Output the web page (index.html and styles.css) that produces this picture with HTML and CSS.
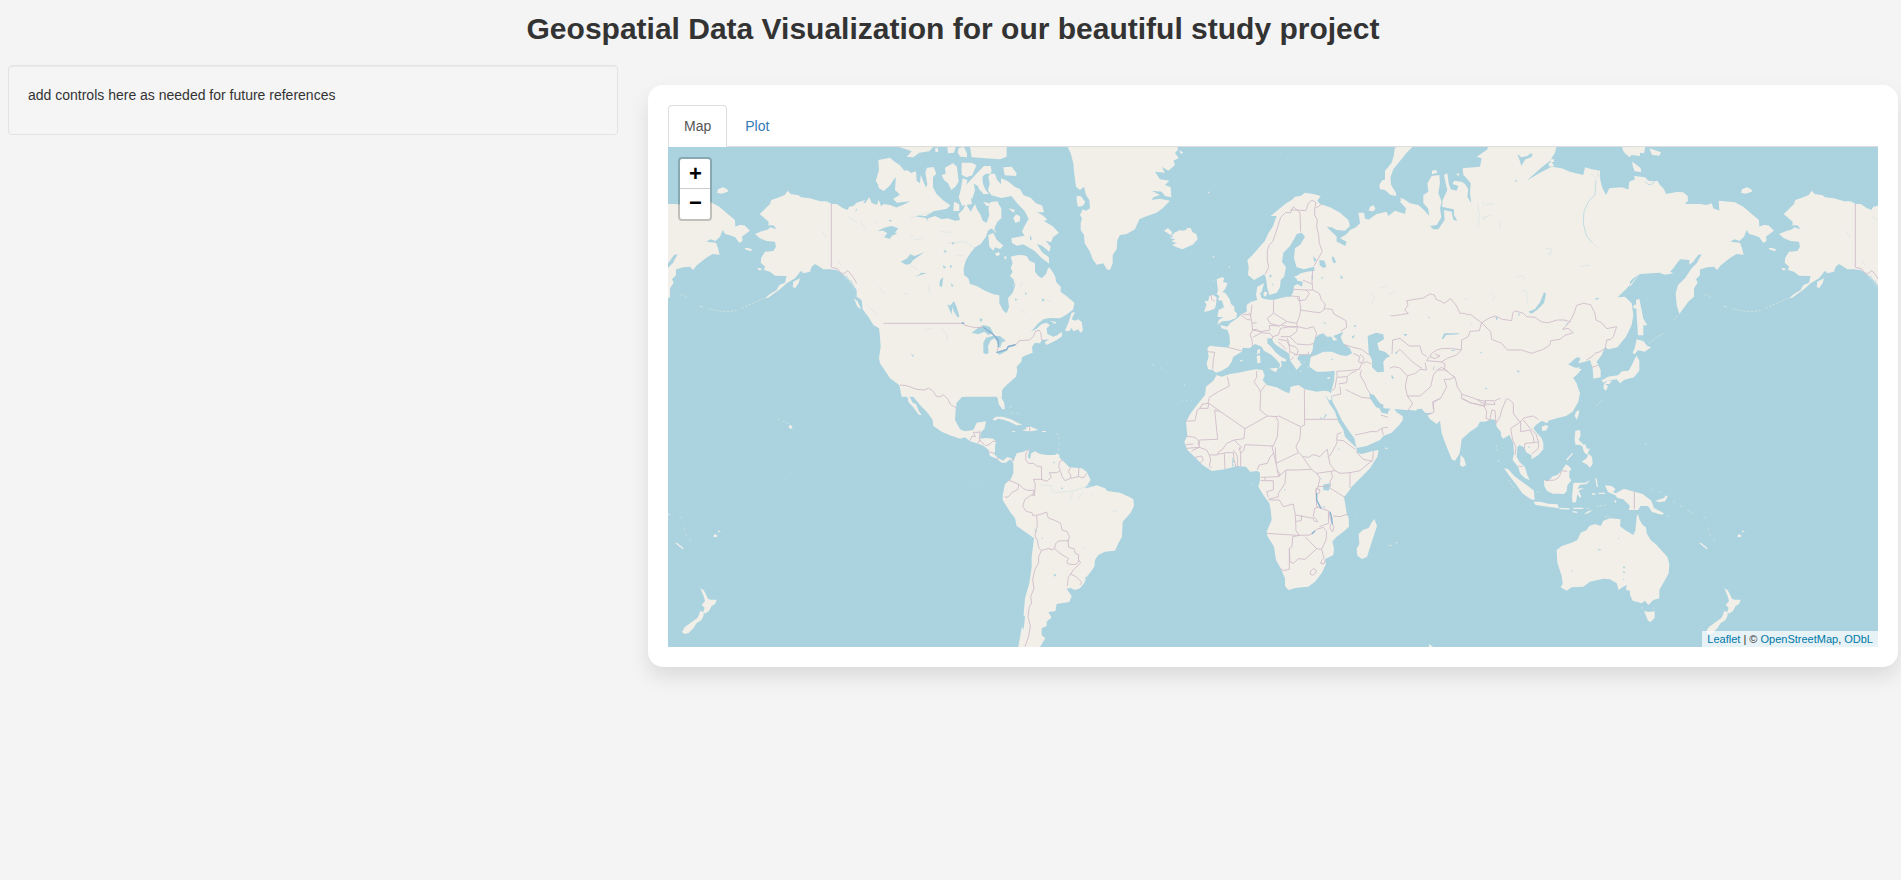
FILE: index.html
```html
<!DOCTYPE html>
<html lang="en">
<head>
<meta charset="utf-8">
<title>Geospatial Data Visualization</title>
<link rel="stylesheet" href="styles.css">
</head>
<body>
<h2 class="page-title">Geospatial Data Visualization for our beautiful study project</h2>
<div class="layout">
  <form class="well"><p>add controls here as needed for future references</p></form>
  <main class="card">
    <ul class="tabs">
      <li><a class="tab tab-active" href="#">Map</a></li>
      <li><a class="tab" href="#">Plot</a></li>
    </ul>
    <div class="map">
      <svg class="world" viewBox="668 147 1210 500" width="1210" height="500" aria-label="World map">
        <defs>
          <!-- Alaska and the Canadian north-west; repeated one world width to the east -->
          <g id="alaska" transform="translate(640 70) scale(.33333)">
            <path class="land" d="M359 432L372 420 390 402 394 390 412 384 434 375 443 362 452 372 476 376 483 382 510 385 540 394 560 394 575 402 590 402 608 414 622 420 628 410 640 408 650 398 676 390 665 404 650 415 645 425 665 412 680 402 688 382 692 398 712 405 716 390 722 410 730 402 750 405 775 415 800 430 830 440 860 445V780H735L720 760 700 752 685 738 690 725 670 705 662 680 650 660 635 640 615 618 590 600 570 598 550 598 535 588 525 582 515 590 510 605 490 610 483 602 465 625 440 640 420 658 400 672 385 683 375 685 390 672 410 660 418 645 435 638 440 618 405 617 390 605 372 600 375 590 362 578 364 563 375 545 400 543 408 530 405 515 380 513 360 505 345 492 365 484 385 478 390 472 410 478 400 466 385 466 386 455 372 443Z"/>
            <path class="land" d="M460 635l20 -10 -4 15 -10 14 -8 -3zM352 595l12 0 0 6 -8 0zM642 685l10 8 12 25 -12 -8zM684 738l18 4 30 24 0 16 -28 -22z"/>
            <path class="fringe" d="M372 685L350 695 325 705 300 718M290 722L260 725 230 722 205 716M190 712l-12 -4M140 682l-12 -8"/>
            <path class="inlet" d="M604 606l14 22 22 24M618 615l18 30 8 22M632 630l14 28"/>
            <path class="border" d="M574 402V592L592 596 606 614 624 602 640 622 656 650 671 665 668 680"/>
            <path class="stream" d="M595 575l10 12M545 482l15 20M625 440l30 20 25 30"/>
          </g>
          <!-- Siberia and Kamchatka; repeated one world width to the west -->
          <g id="far-east" transform="translate(1620 140) scale(.33333)">
            <path class="land" d="M-10 145L10 143 25 150 28 125 45 118 42 108 75 112 85 122 100 124 112 122 120 135 132 148 138 162 170 156 190 157 203 168 204 182 195 192 240 192 260 195 275 190 280 205 298 212 296 182 345 187 370 200 395 222 417 240 418 260 430 255 445 256 462 272 448 282 438 290 440 302 430 309 418 292 402 286 388 282 380 270 372 290 358 303 345 298 330 305 360 308 366 325 371 344 350 342 330 354 312 368 300 378 292 390 282 380 262 382 240 388 240 405 228 418 233 428 222 445 222 470 205 485 198 495 178 522 170 495 167 460 174 435 195 415 215 385 230 370 245 343 234 345 220 365 208 374 208 360 180 358 160 385 150 395 160 400 135 404 118 398 95 400 60 402 40 415 -10 465Z"/>
            <path class="land" d="M363 158l3 -10 15 -6 13 6 2 7 -20 6zM445 325l10 -2 15 6 -5 4 -15 -4zM8 22l45 0 0 15 -15 6 -10 8 -14 -12zM58 20l18 0 -4 20 -12 -2zM88 25l35 12 -5 10 -22 -2zM36 65l6 4 20 15 2 12 -20 -2 -5 -14z"/>
            <path class="fringe" d="M160 540l15 -15M130 580l-20 12 -28 22M255 460l4 10M312 498l8 4"/>
            <path class="inlet" d="M76 124l8 10 14 -2 6 -8"/>
          </g>
          <g id="south-pacific" transform="translate(1600 460) scale(.33333)">
            <path class="land" d="M373 385l10 6 8 14 5 12 10 2 16 0 -5 14 -10 4 -8 16 -12 8 -5 -6 4 -12 -9 -8 10 -12 -4 -15zM372 453l12 4 -2 12 -6 12 -14 8 -10 16 -14 14 -12 3 -8 -6 8 -14 18 -14 20 -14 6 -12zM415 222l9 4 -2 6 -10 -2zM426 212l9 1 -8 5z"/>
            <path class="islet" d="M300 249l22 17"/>
            <path class="fringe" d="M323 202l8 12M330 222l2 5M341 236l2 6M310 170l10 5"/>
          </g>
        </defs>

        <rect class="sea" x="668" y="147" width="1210" height="500"/>
        <use href="#far-east"/><use href="#far-east" x="-1024"/>
        <use href="#south-pacific"/><use href="#south-pacific" x="-1024"/>
        <use href="#alaska"/><use href="#alaska" x="1024"/>

        <!-- North America -->
        <g transform="translate(860 140) scale(.33333)">
          <path class="land" d="M-10 195L0 185 15 190 28 172 35 190 50 198 56 180 64 200 85 198 105 205 130 212 140 222 137 232 165 238 190 232 196 250 205 235 225 228 245 238 262 235 285 242 300 240 295 222 308 210 318 192 332 215 345 192 352 210 362 225 368 242 380 248 388 225 385 205 392 186 412 184 418 196 424 205 424 235 412 245 405 262 408 280 395 265 384 272 378 290 362 312 345 322 332 338 318 360 311 385 312 405 325 415 330 432 350 438 375 452 400 463 418 466 418 490 430 512 440 520 447 502 444 475 458 458 466 436 460 418 450 408 458 395 452 385 458 370 452 350 475 345 492 346 502 350 508 362 525 370 525 395 535 408 545 415 558 402 563 388 568 382 578 396 586 410 588 425 602 440 602 455 622 470 643 488 640 508 618 525 600 535 570 534 550 538 535 550 522 565 512 575 530 566 545 552 560 548 570 556 560 565 562 582 580 590 600 582 607 588 590 600 570 610 558 615 555 606 568 598 545 600 540 610 525 608 516 620 518 638 500 645 486 652 484 665 470 680 472 692 468 710 440 735 426 750V770H125L118 735 90 715 75 692 60 670 57 655 62 620 60 590 57 565 40 555 25 530 8 508 5 480 -10 470Z"/>
          <path class="land" d="M115 20l105 0 -12 14 -30 4 -18 14 -20 -2 15 -16zM262 22l25 -2 -5 18 -18 2zM296 25l15 -5 10 20 0 12 -20 -2 -8 -12zM330 20l110 0 0 30 -20 8 -85 -6zM225 25l8 -2 2 12 -8 2zM55 60l35 -7 14 12 15 10 15 18 -30 22 -15 22 -18 16 -14 -8 -4 -14 -6 -8 10 -33zM108 105l20 -12 15 -2 10 8 15 -5 2 28 10 8 2 -25 16 38 4 -10 -6 -35 5 -15 20 -2 8 20 -10 10 0 30 10 20 20 20 22 15 -10 10 -40 8 -25 15 -20 -3 -20 10 -18 -8 -10 -8 -18 -18 20 -8 20 -10 -40 4 -10 -12 20 -12 -15 -14zM245 105l12 -4 -2 -18 14 -8 10 -5 12 10 5 45 -10 15 -12 10 -10 -20 -12 -10zM305 68l30 0 14 8 -12 30 -18 6 -14 -8zM308 115l14 5 -4 20 10 12 8 40 -30 5 -10 -25 6 -22zM282 185l16 8 0 20 -18 0z"/>
          <path class="land" d="M360 90l12 -12 20 0 3 15 -10 18 4 20 -5 20 10 15 30 8 30 -6 20 25 20 20 12 24 -12 20 -8 18 8 12 -20 4 -20 4 2 14 15 8 18 -4 15 8 20 12 20 20 24 18 -2 -20 -20 -14 -15 -25 15 5 22 18 4 -15 -15 -18 16 5 6 -15 18 -14 -20 -20 -25 -15 10 -4 -12 -12 -18 -10 20 0 -5 -20 -20 -8 -15 -16 -22 -8 -10 -18 -15 -6 -22 -18 -20 -8 0 18 -12 -14 -6 -18 -28 0 -10 10 2 20 8 20 10 10 -16 2 -14 -16 -4 -10 -12 -6 4 20 -8 25 -26 -5 -8 -20zM430 82l25 -2 15 20 -2 8 -34 -2zM385 285l15 -6 10 20 20 18 -10 10 -15 -5 -5 10 -12 -12zM460 235l8 -12 12 6 0 15 -14 5zM405 340l12 -4 3 8 -10 5zM434 348l6 2 -2 8 -5 -2zM370 185l30 8 -20 6zM445 205l20 5 -5 8zM635 518l10 -2 -10 22 10 4 10 -4 10 8 4 26 -8 6 -6 -10 -15 6 -5 -10 -8 10 -12 -2 10 -24zM570 542l20 5 -5 5zM595 582l10 -6 2 10 -10 5z"/>
          <path class="lake" d="M52 272L78 262 95 258 115 265 105 278 112 280 95 288 90 296 72 292 82 280 70 272zM122 365l20 -10 8 -12 14 5 30 -12 -20 14 -14 10 -10 12 -12 2zM165 412l20 -14 16 2 -20 5zM240 420l10 -8 -4 30 -8 -5zM262 492l8 5 12 -14 8 18 8 28 -4 4 -12 -18 -5 -14 -2 22 -6 -12zM335 578l20 -15 15 -8 20 5 10 20 -15 5 -12 -10 -18 8zM370 638l0 -30 8 -15 20 -5 10 5 -16 8 -8 18 2 20 -8 4zM400 588l20 0 18 15 -12 4 -6 18 -10 -20zM410 638l30 -12 4 4 -25 14zM442 618l25 -5 -4 6 -20 4zM152 640l10 8 -4 2zM360 535l8 3 -4 8 -5 -4zM272 430l8 6 -4 6zM545 475l10 4 -8 6zM405 255l4 16 -6 4zM85 240l10 0 -2 6zM250 330l10 2 -4 8zM275 305l10 4 -8 5zM248 375l10 6 -6 6zM270 375l8 4 -8 6zM510 285l6 12 -6 4zM465 475l8 4 -8 3zM495 455l6 8 -6 0z"/>
          <path class="stream" d="M0 245l18 20M40 245l12 5M160 300l30 -6M150 285l10 2M240 275l35 2M260 310l55 -5 30 20M290 345l20 2M150 375l25 15M205 435l5 25M130 460l12 2M55 440l20 22M195 570l20 -5M245 565l15 20 2 20M465 425l-5 15M480 440l8 -12M560 480l12 5M485 512l12 6M20 495l30 28M150 235l60 -18"/>
          <path class="border" d="M70 550H308L315 556 345 563 370 562 398 582 415 600 415 622 410 638 440 628 445 618 468 614 478 602 508 600 520 590 526 574 538 571 543 580 544 598 552 602M120 738L140 738 168 748 195 748 212 745 220 755"/>
          <path class="lake-line" d="M305 548l8 3M370 562l28 20 17 18 0 22M410 638l30 -10 5 -8 22 -6"/>
        </g>

        <!-- Central and South America -->
        <g transform="translate(860 380) scale(.33333)">
          <path class="land" d="M104 0H456L442 8 430 22 423 38 424 52 433 70 434 88 427 88 416 72 413 55 405 42 385 38 372 46 345 48 330 44 305 52 290 68 287 90 285 120 300 148 315 154 340 150 350 128 378 124 374 145 362 158 360 176 378 174 400 176 408 184 405 200 405 214 402 222 415 235 430 242 440 232 452 233 460 245 470 220 490 215 508 208 504 230 510 235 514 220 525 214 540 222 560 225 585 225 592 220 600 235 612 245 628 262 665 265 680 275 692 300 684 312 675 325 690 322 710 316 735 325 742 333 780 338 810 352 820 358 822 378 812 398 800 412 788 425 786 470 775 490 765 512 735 515 715 525 705 540 703 560 685 585 672 610 660 625 645 630 632 624 620 626 635 648 628 666 590 672 586 694 565 696 574 710 560 725 560 738 545 745 545 765 556 775 540 801H475L482 760 490 720 492 690 495 655 508 610 515 560 515 530 522 475 505 462 470 438 465 415 450 395 428 360 428 345 435 312 452 298 460 280 460 250 450 238 438 248 425 248 410 236 390 228 386 210 370 197 350 190 330 184 315 172 300 176 270 166 245 155 220 138 218 120 200 95 180 75 160 50 150 28 138 30 148 48 158 68 168 72 176 92 185 106 176 104 160 82 145 66 144 55 130 38 118 15Z"/>
          <path class="land" d="M398 118l10 -8 20 0 25 8 20 10 14 6 -18 2 -14 -8 -22 -8 -18 -4 -12 6zM498 142l15 -2 22 10 -20 4 -18 -1 -12 -2 14 -3zM453 153l14 0 -5 4zM546 153l12 0 0 3 -12 0zM590 226l8 -3 0 8zM565 712l10 0 -8 8z"/>
          <path class="fringe" d="M450 78l4 6M452 95l8 10M470 98l6 4M590 160l3 6M596 172l2 6M598 190l0 6M596 205l0 8M340 308l3 3M353 318l3 2"/>
          <path class="lake" d="M505 225l6 2 0 10 -6 -4zM580 582l10 2 -6 6zM580 245l5 2 -3 4zM522 445l7 6 1 8zM545 472l4 4 -3 2zM604 320l6 8 -6 -1zM675 594l10 -10 -8 16zM485 735l6 -30 4 5 -4 40z"/>
          <path class="stream" d="M540 314l38 4M570 318l10 20 60 -5 50 -18M640 332l-10 30M670 335l-14 20M692 345l8 4M757 394l15 0M666 510l10 -10M690 320l15 0"/>
          <path class="border" d="M120 15L140 17 170 28 195 30 205 24 220 34 228 48 238 51 250 45 262 55 272 74 288 83M330 182L336 168 346 170 340 157 360 157 360 152M360 158L358 185M352 190L362 182 374 196M376 198L390 192 398 184 408 184M388 216L402 220M410 232L414 240M455 246L460 234M508 208L498 218 497 240 505 250 520 250 530 258 544 260 545 300M545 298L520 298 526 312 523 348 516 344 495 358 488 378 498 394 516 398 518 406 530 406 545 402 560 396 565 414 582 420 602 430 606 450 622 455 628 470 624 486M545 298L560 304 574 292 568 278 590 278 602 272 596 262 598 246 608 240M632 262L625 275 632 285 632 295 615 302 606 290 602 275M632 295L655 290 672 293 680 280M657 264L655 290M446 301L460 306 478 314 490 326 502 331 522 331 518 346M476 314L474 328 455 338 444 352 434 350M530 406L532 440 528 450 525 468 532 480 536 502 544 512 556 508 570 505 572 510 584 506 586 492 595 483 624 482 626 502 642 506 646 520 656 524 655 545 646 554 624 552 620 546 626 536 600 520 584 506M656 540L662 548 640 570 632 582 625 592 622 618M632 582L648 590 665 606 660 615M544 512L536 530 536 548 524 570 518 600 522 625 512 650 515 670 508 680 504 710 511 738 506 768 495 800M508 142L510 154"/>
        </g>

        <!-- Greenland, Iceland, British Isles -->
        <g transform="translate(1060 140) scale(.33333)">
          <path class="land" d="M22 18L32 40 40 70 42 95 48 140 60 150 72 140 78 165 88 180 90 205 78 212 68 208 60 225 66 235 62 250 62 270 72 285 74 310 90 335 98 358 110 374 130 370 140 388 150 390 158 370 158 345 170 328 172 300 180 285 200 282 225 268 238 238 255 230 290 218 308 205 330 182 300 176 275 180 280 172 300 165 275 152 305 155 315 168 334 172 332 142 315 135 328 122 300 118 285 95 315 98 305 80 325 92 345 75 340 62 356 55 345 38 354 30 352 18zM50 168l12 0 14 18 -8 12 -14 2 -4 -16zM358 30l12 8 -8 4z"/>
          <path class="land" d="M312 272l12 -8 12 12 -2 12 12 -12 8 -2 5 -4 8 2 10 -2 5 -6 10 0 5 12 12 6 4 16 -15 16 -18 8 -12 6 -22 -8 -10 -6 14 -4 -16 -6 12 -6 -18 -4 12 -4zM442 158l10 -4 -6 6zM457 348l7 2 -3 4zM506 378l4 2 -2 6z"/>
          <path class="land" d="M470 418l15 -6 8 2 -4 12 14 4 -8 18 -8 8 10 4 12 18 4 14 10 8 0 12 8 8 -2 14 -22 8 -20 2 -15 10 4 -14 14 -8 -18 -2 4 -20 16 -8 -6 -20 -12 -2 4 -12 -8 -6 4 -10zM448 468l10 -4 12 8 -2 22 -4 12 -16 6 -16 4 5 -14 2 -10 -6 -8 12 -2z"/>
          <path class="fringe" d="M458 418l6 8M472 402l3 4M540 664l8 -3M275 674l10 2M300 683l5 2M372 736l4 0M682 58l2 0M590 640l0 4"/>
          <path class="border" d="M454 464L455 478 464 484"/>
        </g>

        <!-- Africa and Arabia -->
        <g transform="translate(1170 360) scale(.33333)">
          <path class="land" d="M140 45L155 50 180 42 205 38 230 33 258 28 278 30 284 48 278 60 290 75 320 82 345 95 358 100 362 80 385 75 405 88 440 95 460 92 475 94 483 100 485 118 478 122 466 104 478 130 495 155 505 185 520 210 525 230 540 245 558 262 562 278 575 282 600 275 626 270 622 290 600 325 575 350 545 380 535 395 522 412 527 440 530 460 536 475 537 500 520 515 500 530 487 545 492 565 490 585 465 598 468 612 455 640 435 665 415 680 380 683 355 690 345 678 345 655 332 625 318 600 312 560 292 528 290 515 305 480 302 450 298 430 280 405 265 380 270 360 270 338 262 333 240 335 228 320 200 318 165 328 125 333 98 315 75 292 52 270 43 245 52 228 48 185 62 160 85 130 105 105 108 80 130 62Z"/>
          <path class="land" d="M495 20L490 90 486 105 487 125 500 148 515 180 535 210 553 235 560 264 590 258 630 240 640 228 665 218 690 192 698 178 685 165 668 155 670 142 655 162 635 158 628 145 618 142 600 115 598 100 612 105 630 130 655 140 672 132 682 146 740 152V0Z"/>
          <path class="land" d="M613 476l8 22 -8 25 -10 30 -12 38 -15 6 -14 -10 -2 -20 8 -15 -2 -30 12 -12 18 -6 8 -15zM645 263l8 0 0 3 -8 0z"/>
          <path class="fringe" d="M35 120l3 3M48 122l3 0M62 122l4 -3M42 75l3 0M242 370l5 2M660 555l6 3M676 548l6 0M558 472l3 2M573 480l3 0"/>
          <path class="lake" d="M459 374l20 -4 1 10 -4 12 -16 -2zM505 265l4 2 -3 4zM452 352l3 4 -3 4zM188 290l4 14 -4 8 4 6 -6 0zM458 437l8 4 -4 4zM448 170l12 6 8 -16 2 6 -8 10 -10 0zM343 388l4 0 -4 6zM555 62l6 4 -4 2z"/>
          <path class="border" d="M172 50L178 78 145 95 118 112 114 130 96 133 92 142 82 150 75 182 45 184M116 130L114 145 88 145M116 130L225 206 292 168 270 150 272 100 268 88 252 65 260 52 260 33M272 95L286 75M134 150L143 238 88 240 84 255M134 150L148 155M225 206L222 236 192 240 170 250 158 268 145 276 142 285M292 168L318 170 325 185 322 230 310 258 225 254 222 270 212 280 212 318M318 170L326 168 392 200 404 195 403 88M404 178H503M392 200L390 235 378 260 385 278 350 295 318 310 312 285 306 258M316 262L318 310 326 350M48 228L75 232 88 245 88 262 50 265M48 254L70 252M88 262L70 270 65 275M88 262L110 270 118 285 142 285M75 292L95 288 100 300 90 310M118 285L122 300 118 318 125 325M165 328L163 280 145 282M163 278L190 278 192 300 198 320M190 270L202 288 203 320M192 240L215 262 205 270M212 280L208 262M262 330L268 315 292 310 300 292 312 278M272 352L325 350M272 362L285 362 285 352M285 362L310 362 310 390 290 395 295 412M326 350L348 330 380 330 424 328 398 290 388 278M326 350L330 340 320 330M348 332L345 370 325 400 325 410 295 418M298 420L328 420 340 440 370 432 376 465 430 475 432 482 442 486 440 478 430 470 434 445 452 440M376 465L378 512 388 526M395 465L394 482 378 484M290 520L380 526 420 525 440 508 460 502 470 515 468 540 455 568 440 566 405 530M388 526L368 530 366 560 358 565 360 605 370 610 385 596 405 598 440 566M358 565L358 628 340 632 332 625M424 328L440 340 482 334 495 332 480 312 475 290 472 268 460 278 450 290 430 284 415 292 398 290M440 340L450 355 444 380 470 378 525 412M482 334L488 350 480 365 482 380M495 332L510 340 540 338 540 384M540 338L570 332 608 300 610 275M608 304L580 298 558 275M478 290L498 255 502 240 520 242 545 260 556 268M500 240L502 222 514 218M444 380L438 395 440 440 452 445 475 452 476 490 448 500M476 455L482 480 492 500 488 516 480 505 482 492M490 468L510 470 534 462M455 568L462 595 455 602 452 610 462 612 466 600M422 634l8 -8 8 4 0 8 -10 8 -8 -4zM438 385l12 4 -2 10 -10 4zM555 225L580 220 600 215 620 215 635 205 660 200 662 180 655 172 632 165M635 205L640 225M662 180L668 155M520 85L545 98 575 112 600 115"/>
          <path class="lake-line" d="M440 400l0 20 10 20 4 5M480 455l5 18 2 20M425 522l10 -9"/>
        </g>

        <!-- South and south-east Asia, Australia -->
        <g transform="translate(1390 360) scale(.33333)">
          <path class="land" d="M-20 -40H540L545 5 532 12 552 22 575 28 560 45 548 55 562 80 570 100 565 125 548 155 528 168 500 175 475 182 472 190 455 182 438 195 430 205 440 218 455 235 460 250 460 268 445 285 425 298 424 285 410 278 402 262 388 255 382 262 380 290 388 305 405 322 412 345 419 360 405 355 390 340 385 322 368 300 372 280 370 250 358 225 340 236 334 230 332 215 320 200 316 180 305 178 285 185 270 185 262 200 240 215 215 238 212 262 208 282 195 302 185 298 170 260 155 220 150 182 140 192 120 178 112 165 130 160 105 158 95 146 55 150 -20 145Z"/>
          <path class="land" d="M0 148l10 -6 10 15 18 12 0 12 -14 16 -14 12 -16 6 0 -60zM212 285l10 10 6 20 -10 6 -8 -6zM455 200l12 -5 8 4 -6 12 -12 2zM558 155l10 -5 -2 15 -6 14 -6 -12zM342 325l12 2 20 22 20 15 20 14 18 14 2 28 -12 -2 -25 -18 -18 -26 -16 -20zM430 425l20 0 25 6 28 2 4 12 -30 -4 -40 -6zM462 360l12 4 14 -15 14 -4 14 -14 12 -18 12 8 4 8 -6 4 0 20 6 8 -12 15 -2 18 -8 8 -16 -1 -17 0 -18 -8 -8 -15zM556 212l14 -2 2 15 -6 15 12 10 2 10 -12 -6 -12 0 -2 -18zM575 305l15 -10 6 -14 10 10 2 20 -8 12 -10 -10zM550 370l6 -2 30 0 14 -8 -10 12 -20 2 -8 12 20 -2 -16 8 8 18 -4 4 -8 -12 -4 24 -10 2 -2 -15zM576 255l10 -2 4 12 8 2 -6 18 -10 -8zM645 376l20 2 12 10 -8 8 8 4 25 -14 20 6 36 10 26 20 8 22 30 16 -6 4 -30 -8 -12 -18 -22 0 -8 12 -28 0 4 -12 -20 -20 -18 -4 -6 -8 -14 -6 -8 -4zM582 462l12 -8 14 -4 -14 10zM606 400l10 0 0 4 -10 0zM625 398l20 0 0 4 -18 0zM672 420l8 2 -4 8z"/>
          <path class="islet" d="M508 445l30 2M550 445l30 0M548 455l14 2M618 355l4 26M530 300l18 -20"/>
          <path class="fringe" d="M355 360l20 28M320 255l2 20M325 300l2 8M620 440l30 -6M590 445l10 0M440 395l10 2M570 245l8 10M600 265l-4 10M618 140l18 -20M765 255l5 -8M-5 557l8 -2M18 550l4 -2M645 470l15 0M755 740l4 10M790 742l2 8"/>
          <path class="land" d="M740 470L744 462 748 478 758 495 768 502 770 520 782 540 800 555 815 572 832 590 838 612 836 640 822 665 808 690 808 715 790 720 775 735 765 722 755 730 728 722 720 705 720 692 708 690 710 675 700 680 686 690 680 670 660 658 640 656 600 665 580 680 545 682 530 692 512 682 518 672 515 648 502 608 500 570 515 558 545 548 562 540 572 518 590 510 598 498 615 492 632 498 640 482 660 475 692 478 690 498 705 510 730 525 736 512ZM762 752l12 4 20 -2 0 20 -12 12 -8 -4z"/>
          <path class="lake" d="M624 568l8 0 0 3 -8 0zM698 620l8 0 -4 6zM700 632l6 6 -6 2zM545 630l4 4 -3 2zM684 534l4 2 -4 2zM700 655l4 4 -4 2zM380 30l8 2 -4 6zM414 258l6 3 -4 3zM286 84l6 2 -4 4zM518 108l5 4 -3 2z"/>
          <path class="border" d="M112 165L132 156 130 128 158 110M260 118L285 124 282 138 240 128 214 112M285 122L312 122 315 134 288 132 285 122M315 122L345 108 352 115 362 122 370 130 370 160 384 180 392 185 378 195 362 205 368 240 378 262 375 285M282 138L290 155 288 175 300 180 305 150 315 152 318 190 330 170 335 150 350 115M392 185L400 175 410 172 430 168 445 178M392 185L392 215 420 210 430 230 432 248 405 250 402 268M400 180L420 205 438 222 446 248 445 265 425 282M432 248L445 246M385 318L398 320M465 362L495 360 508 350 515 332 532 334M733 394V448"/>
        </g>

        <!-- Northern and central Asia -->
        <g transform="translate(1370 140) scale(.33333)">
          <path class="land" d="M-20 235L0 240 20 222 50 215 55 228 75 212 105 222 108 205 90 185 98 175 120 190 145 195 162 210 178 228 174 205 160 190 160 165 175 155 172 130 185 108 208 105 210 130 205 160 215 185 210 205 214 232 200 255 180 258 190 268 205 268 224 240 222 210 245 215 250 240 262 242 252 225 252 208 232 204 216 200 218 180 232 150 226 125 222 105 232 100 236 130 242 148 260 152 265 138 248 132 252 122 275 125 285 132 295 148 292 170 304 190 300 160 302 130 290 115 280 105 278 85 330 80 335 55 320 50 350 30 356 18H560L555 38 540 62 520 78 500 95 470 122 510 98 545 80 575 85 600 95 640 105 645 82 665 88 690 92 690 115 696 142 708 165 718 145 755 142 780 150V440L810 400 775 440 743 472 765 470 775 480 785 490 790 525 785 555 768 590 742 622 715 628 705 622 695 645 680 665 692 690 692 712 670 716 668 685 660 660 645 665 625 670 632 654 620 652 594 674 612 685 630 682 618 695 608 712 620 730 626 750 600 775H60L20 755 -20 740Z"/>
          <path class="land" d="M75 22l55 -4 -20 20 -20 25 -20 25 -8 22 0 24 15 26 -20 0 -18 -14 -10 -8 4 -12 12 -8 0 -25 20 -25 6 -20zM186 92l12 -2 4 8 -16 5zM0 200l10 -4 6 10 -6 8 -14 -2zM90 172l14 12 -8 6zM258 102l10 -2 -2 8zM756 22l54 -2 0 28 -30 -4 -20 -10zM535 70l10 -4 8 12 -14 2zM540 58l12 0 0 8 -10 0zM798 480l10 -4 12 60 12 20 -12 0 0 30 -16 0 -4 -60zM800 598l20 5 12 16 12 2 -20 14 -20 -4 -10 12 -6 -4 6 -14zM795 655l5 -8 8 15 0 30 -16 20 -30 8 -12 10 -10 -12 -30 4 -8 6 -8 -6 20 -12 30 -4 12 -12 20 -2 10 -18zM712 722l14 0 -8 10 -14 0zM702 730l12 8 -6 15 -8 -8zM788 500l8 -8 4 10 -4 5z"/>
          <path class="lake" d="M475 515l20 -8 15 -20 12 -30 6 4 -6 28 -20 20 -18 12zM442 42l12 10 18 -4 10 -8 6 2 -4 10 -18 6 -12 20 -4 -14zM215 596l8 -16 45 0 -2 3 -38 2 -8 12zM240 630l16 -1 -4 5zM440 690l10 4 -6 4zM376 530l8 4 -4 8zM444 520l6 2 -4 6zM712 598l12 -1 -10 4zM345 742l7 4 -4 4zM64 710l8 2 -4 6zM590 546l4 6 -4 4zM330 635l7 2 -5 3zM175 530l6 2 -5 3zM675 475l12 -2 -6 8zM100 582l12 0 -4 6zM434 122l8 -2 -3 6z"/>
          <path class="inlet" d="M678 120L675 165 655 185 642 215 640 250 650 290 668 308"/>
          <path class="stream" d="M668 308L686 325M680 115l-18 -15M685 115l-2 -18M690 110l-8 -12M322 190l6 35 -4 38M345 195l25 -5M335 235l30 -10M340 242l10 -15M340 185l0 10M390 245l2 20M525 325l20 2 -5 20M530 345l18 -12M437 412l20 -6 10 12M455 450l15 5 2 35M365 460l10 10 -8 12M55 435l-10 5M630 380l30 -5M2 460l10 5 -6 20M282 480l14 -8M300 545l8 15"/>
          <path class="border" d="M-8 580L4 580 -2 550 4 530 25 515 45 518 65 528 95 524 115 520 104 510 114 495 110 482 160 474 180 462 193 465 198 478 215 485 222 490 242 476 258 495 270 520 282 520 295 525 300 522 318 536 335 548 358 534 376 528 398 538 425 542 428 520 434 512 460 520 470 530 495 532 515 546 535 548 562 540 582 540 600 545 578 568 595 565 610 578 585 586 570 598 542 602 540 615 520 628 485 640 455 630 412 630 395 610 365 598 362 575 335 548M600 545L612 520 620 496 640 490 662 494 675 520 678 540 695 548 710 566 740 560 730 590 722 598 710 600 706 625 690 635 675 640 668 648 650 660M335 548L328 572 300 574 295 590 275 600 274 630 245 625 215 626 200 630 185 640 180 650 195 656 210 648 195 642M274 630L260 645 232 655 214 666 170 662 178 650M66 642L68 600 90 595 118 618 150 618 156 640 170 650M50 688L72 680 90 684 112 708 136 700 150 688 170 690 165 668M76 640L90 628 102 640 125 664 155 685M112 708L106 740 112 768 150 768 182 740 190 705 202 690 224 690 225 672 214 666M202 690L215 682 235 695M112 768L128 790 114 812M190 690L192 680M225 690L255 712 262 740 275 762 320 778 350 798M255 710L240 718 222 718 230 740 212 775 188 785 190 808M275 762L275 776 300 788 345 798M666 682L684 676"/>
        </g>

        <!-- Europe and western Russia -->
        <g transform="translate(1180 180) scale(.33333)">
          <path class="land" d="M600 102L585 105 565 120 550 128 555 115 552 98 535 98 538 115 540 130 528 142 510 150 500 162 480 175 500 185 496 198 480 190 470 185 470 170 455 155 440 140 455 142 470 150 495 152 510 138 505 120 480 98 450 82 420 72 412 62 422 48 400 42 375 38 362 48 345 50 335 60 318 70 300 85 272 108 290 108 278 140 265 160 255 182 235 205 215 228 202 240 206 262 204 285 222 300 240 290 253 282 258 295 262 325 268 345 290 338 300 322 302 300 312 290 318 262 306 245 310 218 330 198 342 178 350 162 365 158 375 170 360 195 345 205 342 235 350 262 372 268 402 260 404 272 380 275 362 280 348 290 352 302 368 305 366 320 352 312 342 318 340 335 332 350 320 350 300 355 280 360 258 358 245 354 240 340 245 335 252 310 232 320 228 345 232 360 212 366 200 375 200 395 185 402 172 415 160 422 150 430 142 440 120 435 125 445 142 450 148 465 150 490 145 503 115 500 90 497 82 505 86 530 80 550 84 568 98 570 108 578 125 572 145 560 155 545 160 530 185 515 188 503 208 505 225 492 245 500 252 512 275 525 290 540 300 552 298 566 305 558 303 542 315 545 320 540 300 528 285 515 275 502 262 490 262 475 275 475 282 490 298 502 315 512 328 522 330 540 340 555 350 570 360 558 370 552 352 538 358 525 375 525 392 522 398 510 400 490 405 475 415 465 430 460 440 470 455 470 460 482 472 480 460 468 490 456 482 472 490 490 510 505 516 520 500 528 480 525 455 515 430 515 410 525 392 530 388 560 410 575 435 575 465 572 466 592 456 625 452 645 480 650 500 625 560 600 630 600V130Z"/>
          <path class="land" d="M232 510l8 -4 0 14 -8 2zM230 528l10 -2 2 22 -10 2zM268 566l26 -3 -6 14 -8 -4zM252 335l10 2 -4 14 -8 -6zM440 594l12 -4 -6 8zM360 572l15 2 0 3 -14 -2zM598 15l10 -15 20 0 8 20 12 20 0 8 -18 -4 -12 -14 -18 -2zM572 82l8 -6 6 10 -8 8 -8 -4zM180 540l8 0 -4 5zM342 290l12 -4 -4 10z"/>
          <path class="lake" d="M563 468l25 -10 22 5 2 15 -20 12 5 20 18 5 15 14 -12 6 -8 10 2 30 -20 2 -16 -15 0 -22 -10 -22zM418 240l15 2 6 18 -8 4 -12 -8zM455 230l6 0 8 18 -10 0zM270 282l6 6 -8 6zM395 285l4 0 0 15 -4 -4zM455 535l5 5 -6 0zM634 585l6 4 -5 4zM482 284l8 10 -8 2zM425 290l6 4 -6 2zM400 228l10 12 -8 6zM430 425l8 5 -4 2zM515 470l10 -6 -5 12zM670 462l12 0 -6 6zM646 516l8 2 -6 4zM278 308l3 10 -4 -4zM520 438l10 -4 -4 8zM352 530l14 -2 16 8 2 34 -14 20 -8 -20 10 -6 -14 -20z"/>
          <path class="stream" d="M575 340l8 10 -6 20M600 325l20 -8M625 345l20 -10M442 560l0 0"/>
          <path class="fringe" d="M370 545l5 3M380 560l4 4M360 550l8 5M358 545l6 -4"/>
          <path class="border" d="M256 282L266 262 262 240 262 212 268 194 278 185 290 150 302 112 316 98 332 98 340 80 360 98 362 155M330 90L348 90 378 92 385 70 396 60 408 68 404 85 404 105 412 120 410 140 416 165 418 190 427 214 415 235 402 258M408 84L426 72M398 270L396 300 398 330 418 340 425 362 436 372 432 388M340 328L378 330 398 330M378 330L388 340 376 360 356 362 352 352M368 300L396 312M332 348L358 350 362 390 358 410 350 430M362 390L400 396 420 398 436 386 456 388 462 402 498 422 500 442 482 454M281 362L280 400 262 415 270 430 298 438 320 425 350 430 352 440 338 442 305 436M282 400L320 424M298 438L268 436 270 450 240 455 218 450 216 430 230 428M216 374L212 410 216 430M182 404L200 418 212 420M188 402L208 405M212 410L208 398M144 502L184 512M83 515L104 517 100 540 98 568M218 498L216 480 210 465 218 450 230 448 244 458 232 465 218 472M244 458L270 460 278 470 295 465 302 445 330 440 352 440 350 455 330 470 302 470M278 470L276 478M352 440L380 446 400 440 410 460 406 475 412 480M330 470L350 492 385 495 402 490M295 478L320 482 328 498 330 520M295 485L318 508M322 474L328 495 345 500 355 510 350 525 332 515M342 524L384 524 386 515M332 540L342 530M398 520L394 530M492 494L520 502 545 508 560 520 570 525M520 520L540 530 535 545 550 550 560 545 574 552M540 522L552 535 548 548M470 574L500 572 538 568M538 568L545 550M545 570L540 585 555 610 560 625 570 640M470 574L472 592 502 590 512 580 530 572M470 592L465 625 456 632M502 590L500 608 475 612M480 620L482 642 458 648"/>
        </g>

        <!-- Melanesia and Hawaii -->
        <g transform="translate(1600 460) scale(.33333)">
          <path class="fringe" d="M152 87l5 4M178 95l10 2M220 122l8 10M240 136l8 4M262 152l8 2M272 158l10 5M200 168l10 3M628 55l2 0"/>
          <path class="land" d="M166 122l14 -4 12 -4 6 -8 5 4 -8 14 -16 3zM160 150l12 4 12 8 -10 0z"/>
        </g>
        <g transform="translate(640 400) scale(.33333)">
          <path class="land" d="M446 77l6 -2 6 6 -5 6 -5 -3zM84 341l8 2 -6 2z"/>
          <path class="fringe" d="M414 59l5 0M429 64l4 1M439 69l6 2M435 235l3 0"/>
        </g>
        <path class="land" d="M1429 647l0 -3 3 2 1 1z"/>
      </svg>
      <div class="zoom">
        <a class="zoom-button zoom-in" href="#" aria-label="Zoom in">+</a>
        <a class="zoom-button" href="#" aria-label="Zoom out">−</a>
      </div>
      <div class="attribution"><a href="#">Leaflet</a> | © <a href="#">OpenStreetMap</a>, <a href="#">ODbL</a></div>
    </div>
  </main>
</div>
</body>
</html>
```
FILE: styles.css
```css
* { box-sizing: border-box; }
body {
  min-height: 100vh;
  margin: 0;
  background: #f4f4f4;
  color: #333;
  font: 14px/20px "Liberation Sans", Arial, sans-serif;
}
a { text-decoration: none; }
.page-title {
  margin: 0;
  padding: 12px 0 20px 5px;
  font-size: 30px;
  line-height: 33px;
  font-weight: 700;
  text-align: center;
}
.layout {
  display: grid;
  grid-template-columns: 610px 1250px;
  column-gap: 30px;
  align-items: start;
  padding-left: 8px;
}
.well {
  height: 70px;
  padding: 19px;
  background: #f5f5f5;
  border: 1px solid #e3e3e3;
  border-radius: 4px;
  box-shadow: inset 0 1px 1px rgba(0, 0, 0, .05);
}
.well p { margin: 0; }
.card {
  height: 582px;
  margin-top: 20px;
  padding: 20px;
  background: #fff;
  border-radius: 15px;
  box-shadow: 0 10px 20px rgba(0, 0, 0, .1);
}
.tabs {
  display: flex;
  height: 42px;
  margin: 0;
  padding: 0;
  list-style: none;
  border-bottom: 1px solid #ddd;
}
.tab {
  display: block;
  height: 42px;
  margin-right: 2px;
  padding: 10px 15px;
  border: 1px solid transparent;
  border-radius: 4px 4px 0 0;
  color: #337ab7;
}
.tab-active {
  background: #fff;
  border-color: #ddd #ddd transparent;
  color: #555;
}
.map {
  position: relative;
  width: 1210px;
  height: 500px;
  overflow: hidden;
}
.world { display: block; }
.sea { fill: #aad3df; }
.land { fill: #f2efe9; }
.lake { fill: #aad3df; }
.fringe, .islet, .inlet, .stream, .border, .lake-line { fill: none; }
.fringe { stroke: #d3e2e2; stroke-width: 2.5; stroke-dasharray: 7 4; }
.islet { stroke: #f2efe9; stroke-width: 4; }
.inlet { stroke: #b9d9e1; stroke-width: 2.5; }
.stream { stroke: #d6e4e4; stroke-width: 2; }
.border { stroke: #cfbdcb; stroke-width: 2.7; stroke-linejoin: round; }
.lake-line { stroke: #86b1d1; stroke-width: 4; }
.zoom {
  position: absolute;
  top: 10px;
  left: 10px;
  width: 34px;
  height: 64px;
  background: #fff;
  background-clip: padding-box;
  border: 2px solid rgba(0, 0, 0, .2);
  border-radius: 4px;
}
.zoom-button {
  display: block;
  height: 30px;
  color: #000;
  font: bold 22px/28px "Liberation Sans", Arial, sans-serif;
  text-align: center;
  text-indent: 1px;
}
.zoom-in {
  border-bottom: 1px solid #ccc;
  line-height: 30px;
}
.attribution {
  position: absolute;
  right: 0;
  bottom: 0;
  height: 16px;
  padding: 0 5px;
  background: rgba(255, 255, 255, .7);
  font-size: 11px;
  line-height: 16px;
  white-space: nowrap;
}
.attribution a { color: #0078a8; }
```
